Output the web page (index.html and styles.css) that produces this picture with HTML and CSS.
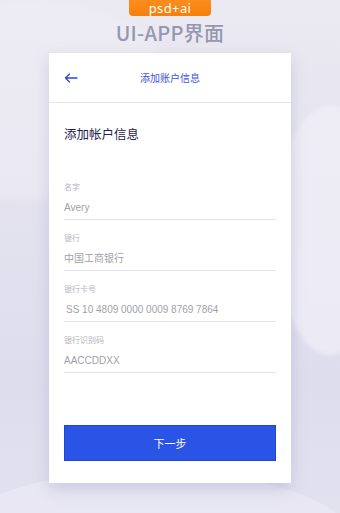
FILE: index.html
```html
<!DOCTYPE html>
<html lang="zh">
<head>
<meta charset="utf-8">
<link rel="stylesheet" href="styles.css">
</head>
<body>
<div class="page">
  <div class="bg-shape s1"></div>
  <div class="bg-shape s2"></div>
  <div class="bg-shape s3"></div>
  <div class="badge">psd+ai</div>
  <div class="title">UI-APP界面</div>
  <div class="card">
    <div class="nav">
      <svg class="back" width="14" height="10" viewBox="0 0 14 10"><path d="M13 5H1.5M5.5 1L1.5 5L5.5 9" fill="none" stroke="#2b45d8" stroke-width="1.3" stroke-linecap="round" stroke-linejoin="round"/></svg>
      <div class="nav-title">添加账户信息</div>
    </div>
    <div class="content">
      <div class="heading">添加帐户信息</div>
      <div class="fields">
        <div class="field"><div class="label">名字</div><div class="value">Avery</div></div>
        <div class="field"><div class="label">银行</div><div class="value">中国工商银行</div></div>
        <div class="field"><div class="label">银行卡号</div><div class="value indent">SS 10 4809 0000 0009 8769 7864</div></div>
        <div class="field"><div class="label">银行识别码</div><div class="value">AACCDDXX</div></div>
      </div>
      <div class="btn">下一步</div>
    </div>
  </div>
</div>
</body>
</html>
```
FILE: styles.css
```css
* { box-sizing: border-box; margin: 0; padding: 0; }
html, body { width: 340px; height: 513px; overflow: hidden; }
body {
  font-family: "Noto Sans CJK SC", "Noto Sans", sans-serif;
  background: #e4e3ee;
}
.page {
  position: relative;
  width: 340px;
  height: 513px;
  display: flex;
  flex-direction: column;
  align-items: center;
  overflow: hidden;
  background: linear-gradient(180deg, #ebeaf2 0%, #e3e2ee 40%, #dedded 75%, #e2e1ee 100%);
}
.bg-shape { position: absolute; border-radius: 50%; }
.s1 { width: 110px; height: 250px; right: -45px; top: 105px; background: rgba(240,239,247,0.75); filter: blur(2px); }
.s2 { width: 420px; height: 160px; left: -60px; top: 470px; background: rgba(233,232,243,0.9); }
.s3 { width: 300px; height: 200px; left: -120px; top: 0; background: rgba(238,237,245,0.6); filter: blur(4px); }
.badge {
  position: relative;
  width: 82px;
  height: 16px;
  background: linear-gradient(180deg, #fb8e1e, #f57f0c);
  border-radius: 0 0 4px 4px;
  color: #fff;
  font-family: "Noto Sans", sans-serif;
  font-size: 13px;
  line-height: 16px;
  letter-spacing: 0.4px;
  text-align: center;
}
.title {
  position: relative;
  margin-top: 4px;
  color: #9796b0;
  font-size: 20px;
  font-weight: 500;
  line-height: 26px;
  letter-spacing: 0.3px;
}
.card {
  position: relative;
  margin-top: 7px;
  width: 242px;
  height: 430px;
  background: #fff;
  box-shadow: 0 6px 14px rgba(150,148,190,0.35);
  display: flex;
  flex-direction: column;
}
.nav {
  height: 50px;
  border-bottom: 1px solid #e6e6ee;
  display: flex;
  align-items: center;
  padding-left: 15px;
  position: relative;
}
.back { display: block; }
.nav-title {
  position: absolute;
  left: 0; right: 0;
  text-align: center;
  color: #3b52e0;
  font-size: 10px;
  line-height: 14px;
  pointer-events: none;
}
.content { padding: 21px 15px 0 15px; display: flex; flex-direction: column; }
.heading { color: #1c2150; font-size: 12.5px; line-height: 20px; }
.fields { margin-top: 35px; display: flex; flex-direction: column; gap: 10px; }
.field { border-bottom: 1px solid #e4e4ee; height: 41px; padding-top: 2px; }
.label { color: #b3b3bd; font-size: 8px; line-height: 12px; }
.value { color: #9f9fac; font-size: 10px; line-height: 14px; margin-top: 8px; font-family: "Liberation Sans", "Noto Sans CJK SC", sans-serif; }
.value.indent { padding-left: 2px; }
.btn {
  margin-top: 52px;
  height: 36px;
  background: #2a54e5;
  border: 1px solid #1e44d8;
  color: #fff;
  font-size: 11px;
  display: flex;
  align-items: center;
  justify-content: center;
}
```
